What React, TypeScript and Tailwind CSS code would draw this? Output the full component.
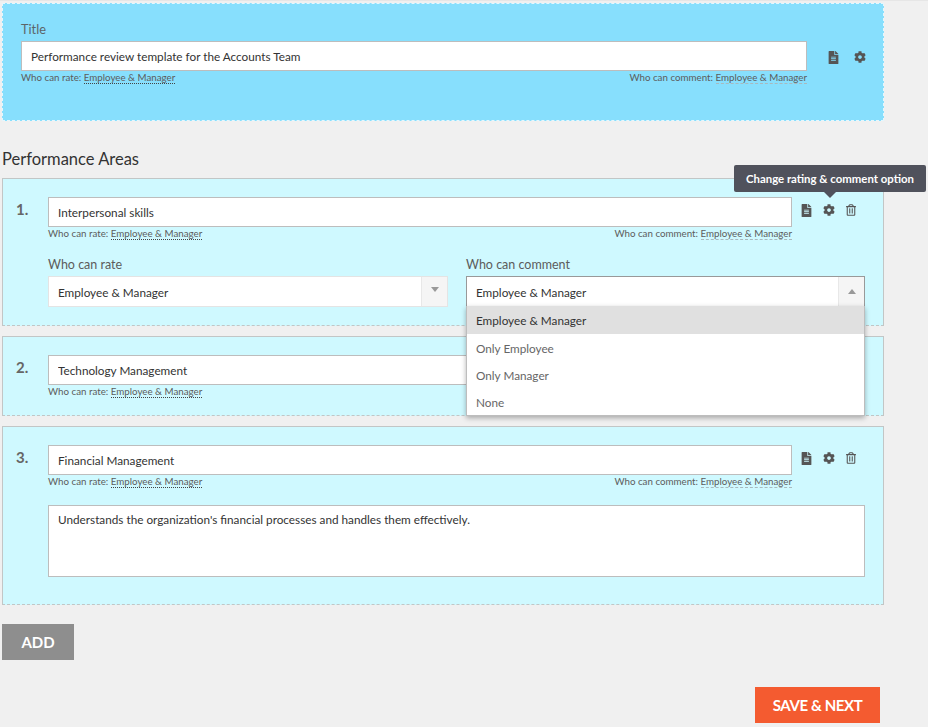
import { ReactNode } from 'react';
import { FaCog, FaFileAlt, FaRegTrashAlt } from 'react-icons/fa';

const options = ['Employee & Manager', 'Only Employee', 'Only Manager', 'None'];

function Caption({ width }: { width: string }) {
  return (
    <div className={`flex justify-between text-[9.75px] leading-[13px] text-[#5c5c5c] ${width}`}>
      <span>
        Who can rate:{' '}
        <span className="border-b border-dotted border-[#444]">Employee &amp; Manager</span>
      </span>
      <span>
        Who can comment:{' '}
        <span className="border-b border-dashed border-[#a9b9bd]">Employee &amp; Manager</span>
      </span>
    </div>
  );
}

function TextBox({ value, width }: { value: string; width: string }) {
  return (
    <input
      readOnly
      value={value}
      className={`block h-[30px] bg-white border border-[#bdbdbd] px-[9px] pt-[1px] text-[11.75px] text-[#333] outline-none ${width}`}
    />
  );
}

function Icons({ trash, tooltip, wide }: { trash?: boolean; tooltip?: boolean; wide?: boolean }) {
  return (
    <div className="flex items-center text-[#555]">
      <FaFileAlt className="w-[11px] h-[13px] ml-[9px]" />
      <div className={`relative ${wide ? 'ml-[15px]' : 'ml-[11px]'}`}>
        <FaCog className="w-[12px] h-[12px] block" />
        {tooltip && (
          <div className="absolute left-1/2 -translate-x-1/2 -top-[39px] ml-[1px] whitespace-nowrap h-[27px] w-[192px] text-center rounded-[2px] bg-[#50525c] text-white text-[11.4px] font-bold leading-[27px] z-20">
            Change rating &amp; comment option
            <span className="absolute left-1/2 -translate-x-1/2 top-full border-x-[6px] border-x-transparent border-t-[6px] border-t-[#50525c]" />
          </div>
        )}
      </div>
      {trash && <FaRegTrashAlt className="w-[10px] h-[12px] ml-[11px]" />}
    </div>
  );
}

function Select({ open }: { open?: boolean }) {
  return (
    <div
      className={`relative flex h-[31px] bg-white border ${open ? 'border-[#999]' : 'border-[#e4e4e4]'}`}
    >
      <div className="flex-1 px-[9px] pt-[2px] text-[11.75px] leading-[28px] text-[#333]">Employee &amp; Manager</div>
      <div className="w-[26px] flex items-center justify-center bg-[#f5f5f5] border-l border-[#e8e8e8]">
        {open ? (
          <span className="border-x-[4px] border-x-transparent border-b-[5px] border-b-[#999]" />
        ) : (
          <span className="border-x-[4px] border-x-transparent border-t-[5px] border-t-[#999] -mt-[4px]" />
        )}
      </div>
      {open && (
        <div className="absolute -left-px -right-px top-full z-10 bg-white border border-[#bdbdbd] border-t-0 shadow-[0_2px_5px_rgba(0,0,0,0.3)]">
          {options.map((option, i) => (
            <div
              key={option}
              className={`px-[9px] text-[11.75px] leading-[29px] ${
                i === 0 ? 'h-[28px] bg-[#e0e0e0] text-[#333]' : 'h-[27px] text-[#666]'
              }`}
            >
              {option}
            </div>
          ))}
        </div>
      )}
    </div>
  );
}

function Card({ num, height, children }: { num: string; height: string; children: ReactNode }) {
  return (
    <div
      className={`flex w-[882px] ml-[2px] pl-[13px] pt-[18px] bg-[#cff9ff] border border-[#c2c6c6] [border-bottom-style:dashed] ${height}`}
    >
      <div className="w-[32px] text-[15px] font-bold leading-[24px] text-[#666]">{num}</div>
      <div className="w-[817px]">{children}</div>
    </div>
  );
}

export default function App() {
  return (
    <div
      className="w-[928px] h-[727px] overflow-hidden bg-[#f0f0f0] border-t border-[#e6e6e6]"
      style={{ fontFamily: 'Lato, "Liberation Sans", sans-serif' }}
    >
      {/* title */}
      <div className="w-[882px] h-[118px] ml-[2px] mt-[2px] pl-[18px] pt-[15px] bg-[#87dffd] border border-dashed border-[#e4f7fe]">
        <div className="text-[12.8px] leading-[20px] mb-[2px] text-[#5c6468]">Title</div>
        <div className="flex items-center">
          <TextBox value="Performance review template for the Accounts Team" width="w-[786px]" />
          <div className="ml-[12px] mt-[2px]">
            <Icons wide />
          </div>
        </div>
        <Caption width="w-[786px]" />
      </div>

      <h2 className="mt-[27px] ml-[2px] text-[16.5px] leading-[22px] text-[#333]">Performance Areas</h2>

      <div className="mt-[8px] flex flex-col gap-[10px]">
        <Card num="1." height="h-[148px]">
          <div className="flex items-center">
            <TextBox value="Interpersonal skills" width="w-[744px]" />
            <div className="-mt-[4px]">
              <Icons trash tooltip />
            </div>
          </div>
          <Caption width="w-[744px]" />
          <div className="mt-[15px] grid grid-cols-[400px_399px] gap-x-[18px]">
            <div>
              <div className="text-[12.5px] leading-[20px] mb-[1px] text-[#5c5c5c]">Who can rate</div>
              <Select />
            </div>
            <div>
              <div className="text-[12.5px] leading-[20px] mb-[1px] text-[#5c5c5c]">Who can comment</div>
              <Select open />
            </div>
          </div>
        </Card>

        <Card num="2." height="h-[80px]">
          <TextBox value="Technology Management" width="w-[744px]" />
          <Caption width="w-[744px]" />
        </Card>

        <Card num="3." height="h-[179px]">
          <div className="flex items-center">
            <TextBox value="Financial Management" width="w-[744px]" />
            <div className="-mt-[4px]">
              <Icons trash />
            </div>
          </div>
          <Caption width="w-[744px]" />
          <div className="mt-[17px] h-[72px] w-[817px] bg-white border border-[#bdbdbd] px-[9px] py-[6px] text-[11.75px] leading-[16px] text-[#333]">
            Understands the organization's financial processes and handles them effectively.
          </div>
        </Card>
      </div>

      <button className="block mt-[19px] ml-[2px] w-[72px] h-[36px] bg-[#8e8e8e] text-white text-[15px] font-bold">
        ADD
      </button>

      <div className="mt-[27px] w-[880px] flex justify-end">
        <button className="w-[125px] h-[36px] bg-[#f45b30] text-white text-[15px] font-bold tracking-[-0.4px]">
          SAVE &amp; NEXT
        </button>
      </div>
    </div>
  );
}
